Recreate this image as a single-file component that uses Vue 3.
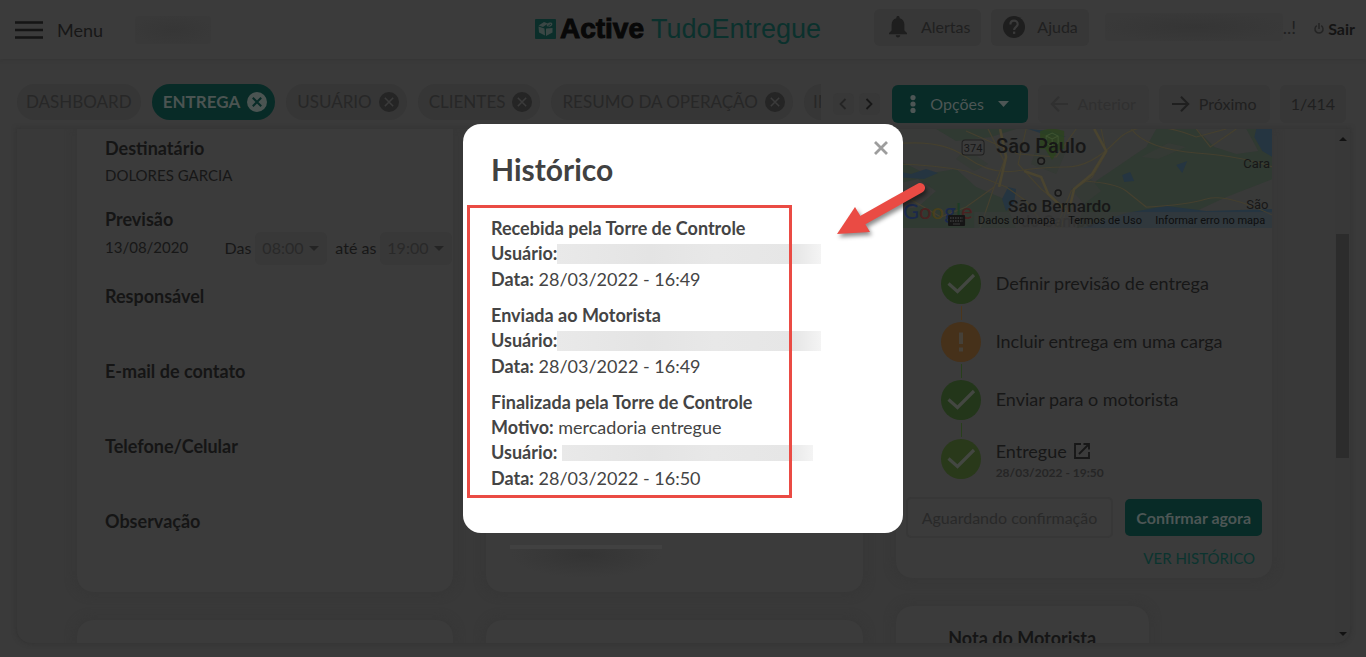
<script setup>
import { ref } from 'vue'

const tabs = [
  { label: 'DASHBOARD' },
  { label: 'ENTREGA', closable: true, active: true },
  { label: 'USUÁRIO', closable: true },
  { label: 'CLIENTES', closable: true },
  { label: 'RESUMO DA OPERAÇÃO', closable: true },
  { label: 'IM' },
]

const from = ref('08:00')
const until = ref('19:00')

const emptyFields = ['Responsável', 'E-mail de contato', 'Telefone/Celular', 'Observação']

const steps = [
  { label: 'Definir previsão de entrega', state: 'done' },
  { label: 'Incluir entrega em uma carga', state: 'warn' },
  { label: 'Enviar para o motorista', state: 'done' },
  { label: 'Entregue', state: 'final', link: true, date: '28/03/2022 - 19:50' },
]

const history = [
  { title: 'Recebida pela Torre de Controle', date: '28/03/2022 - 16:49' },
  { title: 'Enviada ao Motorista', date: '28/03/2022 - 16:49' },
  { title: 'Finalizada pela Torre de Controle', reason: 'mercadoria entregue', date: '28/03/2022 - 16:50' },
]
</script>

<template>
  <div class="page">
    <header class="topbar">
      <div class="start">
        <button class="menu" type="button">
          <svg width="28" height="18" viewBox="0 0 28 18"><path d="M0 1.500H28M0 9H28M0 16.500H28" stroke="#151515" stroke-width="2.600" /></svg>
          <span>Menu</span>
        </button>
        <span class="smudge company"></span>
      </div>
      <div class="logo">
        <svg width="21" height="20" viewBox="0 0 21 20">
          <rect width="21" height="20" rx="1" fill="#0b2e2a" />
          <path d="M3.500 6.500L9 3L13 4.500L8 8ZM3.500 7.500L9.500 9.500L10 16.500L4 13.500ZM11 9.500L17.500 9V13.500L11 17ZM12 7.500C11 5 14 2.500 17 4C18.500 6 15.500 8.500 12 7.500Z" fill="#3b4745" />
          <path d="M10.500 17V9.500L16 5" fill="none" stroke="#0b2e2a" stroke-width=".8" />
        </svg>
        <strong>Active</strong><span>TudoEntregue</span>
      </div>
      <div class="tools">
        <button class="tool" type="button">
          <svg width="18" height="22" viewBox="0 0 18 22"><path d="M9 0C8 0 7.400.700 7.400 1.600V2.300C4.300 3 2.600 5.600 2.600 9V14.500L0 17V18.300H18V17L15.400 14.500V9C15.400 5.600 13.700 3 10.600 2.300V1.600C10.600.700 10 0 9 0ZM6.800 19.300H11.200C11.200 20.600 10.300 21.500 9 21.500S6.800 20.600 6.800 19.300Z" fill="#1e1e1e" /></svg>
          Alertas
        </button>
        <button class="tool" type="button">
          <svg width="22" height="22" viewBox="0 0 22 22"><circle cx="11" cy="11" r="11" fill="#1e1e1e" /><path d="M7.400 8.400C7.400 6 9 4.700 11 4.700S14.700 6.100 14.700 8.200C14.700 10.700 11.100 11 11.100 14" fill="none" stroke="#3a3a3a" stroke-width="2.200" /><rect x="10" y="15.600" width="2.300" height="2.300" fill="#3a3a3a" /></svg>
          Ajuda
        </button>
        <span class="user"><span class="smudge person"></span>..!</span>
        <button class="exit" type="button">
          <svg width="10" height="12" viewBox="0 0 10 12"><path d="M2.800 2.700A4 4 0 1 0 7.200 2.700M5 0V6" fill="none" stroke="#242424" stroke-width="1.500" /></svg>
          Sair
        </button>
      </div>
    </header>

    <div class="bar">
      <nav class="tabs">
        <button v-for="t in tabs" :key="t.label" type="button" class="tab" :class="{ active: t.active, closable: t.closable }">
          {{ t.label }}
          <svg v-if="t.closable" width="20" height="20" viewBox="0 0 20 20"><circle class="disc" cx="10" cy="10" r="10" /><path class="cross" d="M5.800 5.800L14.200 14.200M14.200 5.800L5.800 14.200" /></svg>
        </button>
      </nav>
      <div class="scrollers">
        <button type="button" aria-label="Abas anteriores"><svg width="8" height="12" viewBox="0 0 8 12"><path d="M6.500 1L1.500 6L6.500 11" fill="none" stroke="#252525" stroke-width="1.800" /></svg></button>
        <button type="button" aria-label="Próximas abas"><svg width="8" height="12" viewBox="0 0 8 12"><path d="M1.500 1L6.500 6L1.500 11" fill="none" stroke="#181818" stroke-width="1.800" /></svg></button>
      </div>
      <div class="actions">
        <button class="options" type="button">
          <svg width="6" height="18" viewBox="0 0 6 18"><g fill="#4d5655"><circle cx="3" cy="2.600" r="2.600" /><circle cx="3" cy="9" r="2.600" /><circle cx="3" cy="15.400" r="2.600" /></g></svg>
          Opções
          <svg width="11" height="6" viewBox="0 0 11 6"><path d="M0 0H11L5.500 6Z" fill="#4d5655" /></svg>
        </button>
        <button class="step off" type="button" disabled>
          <svg width="18" height="16" viewBox="0 0 18 16"><path d="M18 8H2M9 .800L1.800 8L9 15.200" fill="none" stroke="#303030" stroke-width="2" /></svg>
          Anterior
        </button>
        <button class="step" type="button">
          <svg width="18" height="16" viewBox="0 0 18 16"><path d="M0 8H16M9 .800L16.200 8L9 15.200" fill="none" stroke="#1f1f1f" stroke-width="2" /></svg>
          Próximo
        </button>
        <span class="counter">1/414</span>
      </div>
    </div>

    <main class="panel">
      <div class="columns">
        <div class="column">
          <section class="card first">
            <div class="field">
              <h2>Destinatário</h2>
              <p>DOLORES GARCIA</p>
            </div>
            <div class="field forecast">
              <h2>Previsão</h2>
              <div class="when">
                <span class="day">13/08/2020</span>
                <label for="from">Das</label>
                <span class="pick">
                  <select id="from" v-model="from"><option>08:00</option></select>
                  <svg width="10" height="5" viewBox="0 0 10 5"><path d="M0 0H10L5 5Z" fill="#242424" /></svg>
                </span>
                <label for="until">até as</label>
                <span class="pick">
                  <select id="until" v-model="until"><option>19:00</option></select>
                  <svg width="10" height="5" viewBox="0 0 10 5"><path d="M0 0H10L5 5Z" fill="#242424" /></svg>
                </span>
              </div>
            </div>
            <div v-for="f in emptyFields" :key="f" class="field empty"><h2>{{ f }}</h2></div>
          </section>
          <section class="card next"></section>
        </div>

        <div class="column">
          <section class="card second"><span class="smudge note"></span></section>
          <section class="card next"></section>
        </div>

        <div class="column">
          <section class="card third">
            <svg class="map" viewBox="0 0 376 99" preserveAspectRatio="xMidYMid slice">
              <rect width="376" height="99" fill="#303a32" />
              <path d="M0 0H40L60 12L95 8L120 0H260L250 18L225 35L200 52L190 72L180 99H120L108 70L80 58L60 40L30 45L0 30ZM300 0H350L362 22L340 25L318 18ZM0 55L22 50L40 62L22 78L0 82ZM330 68L376 50V99H290L300 82Z" fill="#393a39" />
              <path d="M145 5L170 22L160 45L135 35ZM175 60L195 50L205 62L188 75ZM245 28L272 14L290 18L262 30ZM70 20L92 35L78 42L60 30Z" fill="#353a35" />
              <path d="M0 42L15 45L30 40L42 44L28 50L0 48ZM112 58L120 60L118 74L110 82L106 70ZM226 46L234 43L238 52L228 53ZM280 36L291 32L286 44ZM360 0H376V28L366 22L358 8ZM196 95L230 84L270 77L310 82L376 80V99H186ZM132 0L154 2L170 8L150 6Z" fill="#253541" />
              <g fill="none" stroke="#45402f" stroke-width="1.200">
                <path d="M0 15Q45 10 70 28T120 42T170 38T220 12T300 8L330 0" />
                <path d="M0 35Q40 36 70 42L110 58L130 72L150 99" />
                <path d="M92 0L108 32L98 58L84 99M130 0L122 35L145 60L170 80L165 99" />
                <path d="M205 0L210 24L196 48L175 62L160 99M180 0L160 28L122 25L70 2M235 0Q250 20 300 24T376 38" />
                <path d="M186 52Q220 54 230 62L250 78Q290 76 310 70T376 86M0 62L45 88L70 78L98 58M300 0L314 18L340 0" />
              </g>
              <g fill="none" stroke="#4a442f" stroke-width="2.600"><path d="M104 0L110 28L103 58M198 0L210 22L196 45L178 60L172 85M128 42L145 48L152 65L168 80" /></g>
              <rect x="66" y="11" width="22" height="15" rx="3" fill="#3b3b3b" stroke="#202020" />
              <path d="M156 31L149 20H144V2L156 -1L168 2V20H163Z" fill="#2c431d" opacity=".8" />
              <path d="M150 7L156 4L162 7V14L156 18L150 14ZM150 7L156 10L162 7M156 10V18" fill="none" stroke="#3e5330" />
              <g font-family="Roboto, sans-serif" fill="#171717">
                <text x="77" y="23" font-size="11" text-anchor="middle">374</text>
                <text x="100" y="24" font-size="20" font-weight="500">São Paulo</text>
                <text x="112" y="83" font-size="17" font-weight="500">São Bernardo</text>
                <text x="125" y="98" font-size="16" font-weight="500" opacity=".35">do Campo</text>
                <text x="347" y="39" font-size="13">Cara</text>
                <text x="350" y="80" font-size="13">São</text>
              </g>
              <g fill="#3a3a38" stroke="#181818" stroke-width="1.600"><circle cx="145" cy="32" r="3.300" /><circle cx="162" cy="64" r="3" /></g>
              <g font-family="Lato, sans-serif" font-size="22" font-weight="500">
                <text x="7" y="90"><tspan fill="#1b294b">G</tspan><tspan fill="#492221">o</tspan><tspan fill="#49401b">o</tspan><tspan fill="#1b294b">g</tspan><tspan fill="#1d3c27">l</tspan><tspan fill="#492221">e</tspan></text>
              </g>
              <rect x="78" y="83" width="298" height="16" fill="#3a3b3b" opacity=".55" />
              <rect x="52" y="86" width="17" height="11" rx="1" fill="#151515" />
              <path d="M54 89H67M54 92H67" stroke="#3b3b3b" stroke-width="1.500" stroke-dasharray="1.500 1" /><path d="M57 95H64" stroke="#3b3b3b" />
              <g font-family="Roboto, sans-serif" font-size="11" fill="#0e0e0e">
                <text x="82" y="95">Dados do mapa</text>
                <text x="172" y="95">Termos de Uso</text>
                <text x="259" y="95">Informar erro no mapa</text>
              </g>
            </svg>
            <ol class="steps">
              <li v-for="s in steps" :key="s.label" :class="s.state">
                <svg class="badge" width="40" height="40" viewBox="0 0 40 40">
                  <circle cx="20" cy="20" r="20" />
                  <path v-if="s.state === 'warn'" d="M18 10.500H22V22H18ZM18 25.500H22V29.500H18Z" fill="#454038" />
                  <path v-else d="M7.500 19.500L16.500 27.500L33 11" fill="none" stroke="#434741" stroke-width="3.200" />
                </svg>
                <div class="what">
                  <span>{{ s.label }}
                    <svg v-if="s.link" width="16" height="16" viewBox="0 0 16 16"><path d="M7 1H1V15H15V9M9.500 1H15V6.500M15 1L5 11" fill="none" stroke="#171717" stroke-width="1.800" /></svg>
                  </span>
                  <small v-if="s.date">{{ s.date }}</small>
                </div>
              </li>
            </ol>
            <div class="confirm">
              <button class="waiting" type="button" disabled>Aguardando confirmação</button>
              <button class="now" type="button">Confirmar agora</button>
            </div>
            <a class="see" href="#">VER HISTÓRICO</a>
          </section>
          <section class="card rating"><h2>Nota do Motorista</h2></section>
        </div>
      </div>
      <div class="track">
        <svg width="8" height="4" viewBox="0 0 8 4"><path d="M0 4H8L4 0Z" fill="#121212" /></svg>
        <span class="thumb"></span>
        <svg width="8" height="4" viewBox="0 0 8 4"><path d="M0 0H8L4 4Z" fill="#121212" /></svg>
      </div>
    </main>

    <div class="backdrop">
      <div class="dialog" role="dialog" aria-labelledby="dialog-title">
        <button class="close" type="button" aria-label="Fechar">
          <svg width="14" height="14" viewBox="0 0 14 14"><path d="M1 1L13 13M13 1L1 13" stroke="#9d9d9d" stroke-width="2.800" /></svg>
        </button>
        <h1 id="dialog-title">Histórico</h1>
        <div v-for="h in history" :key="h.title" class="entry">
          <p><b>{{ h.title }}</b></p>
          <p v-if="h.reason"><b>Motivo:</b> {{ h.reason }}</p>
          <p class="who"><b>Usuário:</b><span class="masked" :class="{ short: h.reason }"></span></p>
          <p class="date"><b>Data:</b> {{ h.date }}</p>
        </div>
        <div class="marker"></div>
        <svg class="arrow" width="96" height="66" viewBox="0 0 96 66"><path d="M85 8L28 40" stroke="#ea4b44" stroke-width="10" stroke-linecap="round" /><path d="M2 54L20 27L35 52Z" fill="#ea4b44" /></svg>
      </div>
    </div>
  </div>
</template>

<style>
body { background: #3b3b3b; }
</style>

<style scoped>
* { box-sizing: border-box; }
.page {
  height: 100vh;
  display: flex;
  flex-direction: column;
  overflow: hidden;
  background: #3a3a3a;
  color: #171717;
  font: 16px/24px Lato, Carlito, sans-serif;
}
button, select { font: inherit; color: inherit; border: 0; background: none; padding: 0; white-space: nowrap; }
button { display: flex; align-items: center; }
h1, h2, p, ol { margin: 0; padding: 0; }
svg { flex: none; }
.smudge { display: block; border-radius: 4px; }

.topbar {
  height: 59px;
  flex: none;
  display: grid;
  grid-template-columns: 1fr auto 1fr;
  align-items: center;
  padding: 0 11px 5px 15px;
  background: #3b3b3b;
  box-shadow: 0 1px 3px #363636;
}
.start { display: flex; align-items: center; padding-top: 5px; }
.menu { gap: 14px; font-size: 18px; }
.company { width: 76px; height: 28px; margin-left: 32px; background: radial-gradient(#363636, #393939 75%); }
.logo { display: flex; align-items: center; margin-right: 14px; font: 27px/30px "Liberation Sans", Arial, sans-serif; color: #0b312d; padding-top: 3px; }
.logo strong { font-size: 28px; margin: 0 7px 0 4px; color: #080808; -webkit-text-stroke: 1px #080808; }
.tools { display: flex; justify-content: flex-end; align-items: center; color: #202020; }
.tool { height: 37px; gap: 14px; padding: 0 11px 0 15px; margin-right: 10px; border-radius: 6px; background: #373737; }
.tool:nth-child(2) { gap: 12px; padding-left: 12px; }
.user { display: flex; align-items: center; margin: 0 18px 0 6px; font-size: 18px; }
.person { width: 178px; height: 28px; background: radial-gradient(#353535, #393939 75%); }
.exit { gap: 4px; font-weight: bold; color: #141414; padding-top: 3px; }

.bar { display: flex; flex: none; align-items: flex-end; height: 39px; margin-top: 25px; padding: 0 20px 0 17px; }
.tabs { flex: 1; min-width: 0; display: flex; align-self: flex-start; gap: 11px; overflow: hidden; }
.tab { height: 36px; flex: none; gap: 7px; padding: 0 9px; border-radius: 18px; background: #363636; color: #272727; font-size: 17px; }
.tab.closable { padding: 0 8px 0 11px; }
.tab .disc { fill: #252525; }
.tab .cross { fill: none; stroke: #3b3b3b; stroke-width: 1.6px; }
.tab.active { background: #082b27; color: #4b5452; font-weight: bold; }
.tab.active .disc { fill: #4b5452; }
.tab.active .cross { stroke: #082b27; stroke-width: 2px; }
.scrollers { display: flex; align-self: center; gap: 5px; margin: 0 12px; }
.scrollers button { width: 21px; height: 22px; justify-content: center; border-radius: 5px; background: #383838; }
.actions { display: flex; gap: 10px; }
.actions > * { height: 38px; border-radius: 6px; background: #373737; color: #202020; display: flex; align-items: center; }
.actions .options { width: 136px; justify-content: center; gap: 14px; background: #082b27; color: #4d5655; }
.step { width: 111px; justify-content: center; gap: 9px; }
.actions .off { color: #303030; background: #383838; }
.counter { padding: 0 11px; }

.panel {
  flex: 1;
  min-height: 0;
  display: flex;
  margin: 6px 16px 14px 17px;
  overflow: hidden;
  background: #393939;
  border-radius: 0 0 14px 14px;
  box-shadow: 0 0 4px 1px #333;
}
.columns { flex: 1; display: grid; grid-template-columns: repeat(3, minmax(0, 1fr)); gap: 33px; padding: 0 63px 0 60px; }
.column { display: flex; flex-direction: column; gap: 28px; }
.card { flex: none; background: #3b3b3b; border-radius: 16px; box-shadow: 0 0 8px 3px #373737; }
.first, .second, .third { border-top-left-radius: 0; border-top-right-radius: 0; }
.first { min-height: 463px; padding: 7px 0 0 28px; }
.next { height: 120px; }
h2 { font-size: 18px; line-height: 24px; color: #151515; }
.field { min-height: 71px; }
.field p { padding-top: 3px; font-size: 15px; }
.forecast { min-height: 77px; }
.empty { min-height: 75px; }
.when { display: flex; align-items: center; white-space: nowrap; height: 34px; }
.day { flex: 1; font-size: 15px; padding-bottom: 3px; }
.pick { position: relative; margin: 0 8px 0 4px; }
.pick:last-child { margin-right: 1px; }
.pick select { appearance: none; display: block; width: 72px; height: 33px; padding-left: 7px; border-radius: 6px; background: #383838; color: #292929; }
.pick svg { position: absolute; right: 8px; top: 14px; pointer-events: none; }
.second { min-height: 463px; display: flex; align-items: flex-end; padding: 0 24px 14px; }
.note { width: 152px; height: 33px; border-top: 4px solid #414141; border-radius: 0; background: radial-gradient(at 50% 20%, #343434, #3b3b3b 70%); }

.third { padding-bottom: 8px; }
.map { display: block; width: 100%; height: 99px; }
.steps { list-style: none; padding: 36px 0 0 45px; }
.steps li { display: flex; gap: 15px; min-height: 58px; position: relative; font-size: 18px; }
.steps li.final { margin-top: 1px; }
.steps li + li::before { content: ''; position: absolute; left: 20px; top: -16px; width: 1px; height: 14px; background: #283f1b; }
.steps li.warn::before { background: #4c361b; }
.badge { fill: #23361a; }
.warn .badge { fill: #46311a; }
.final .badge { fill: #29391a; }
.what { display: flex; flex-direction: column; line-height: 24px; padding-top: 7px; }
.final .what { padding-top: 0; }
.what span svg { margin: 0 0 -1px 3px; }
.what small { font-size: 12px; line-height: 20px; color: #262626; font-weight: bold; }
.confirm { display: flex; align-items: center; justify-content: flex-end; gap: 12px; padding-right: 10px; }
.waiting { height: 41px; padding: 0 14px; border: 2px solid #373737; border-radius: 5px; color: #292929; }
.now { height: 37px; padding: 0 11px; border-radius: 5px; background: #082b27; color: #4d5655; font-weight: bold; }
.see { display: block; text-align: right; padding: 8px 17px 0 0; font-size: 15px; color: #0b342f; text-decoration: none; }
.rating { width: 253px; height: 120px; padding-top: 20px; text-align: center; }

.track { width: 15px; display: flex; flex-direction: column; align-items: center; padding: 8px 0 7px; background: #383838; }
.thumb { width: 13px; flex: 0 1 224px; margin: 93px 0 auto; background: #2c2c2c; }

.backdrop { position: fixed; inset: 0; display: flex; align-items: center; justify-content: center; }
.dialog { position: relative; width: 440px; padding: 27px 28px 41px; border-radius: 18px; background: #fff; color: #444; font-size: 18px; line-height: 25px; }
.dialog h1 { font-size: 30px; line-height: 36px; color: #414141; margin-bottom: 29px; }
.entry + .entry { margin-top: 10px; }
.entry p { white-space: nowrap; }
.entry .date { line-height: 27px; }
.entry .who { display: flex; align-items: center; }
.masked { width: 264px; height: 20px; background: linear-gradient(90deg, #e9e9e9, #e4e4e4 35%, #e8e8e8 60%, #e6e6e6 90%, #f4f4f4); }
.masked.short { width: 251px; height: 16px; margin-left: 5px; }
.close { position: absolute; right: 15px; top: 17px; }
.marker { position: absolute; left: 4px; top: 81px; width: 325px; bottom: 35px; border: 3px solid #ea4b44; pointer-events: none; }
.arrow { position: absolute; left: 372px; top: 56px; filter: drop-shadow(2px 3px 2px rgba(0, 0, 0, .45)); pointer-events: none; }
</style>
